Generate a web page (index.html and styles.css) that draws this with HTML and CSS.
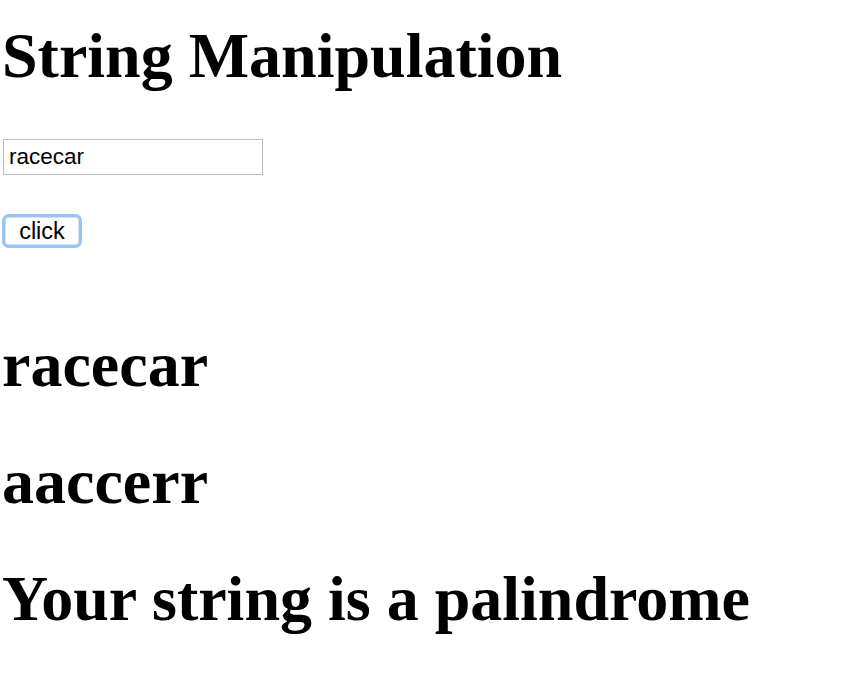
FILE: index.html
```html
<!DOCTYPE html>
<html>
<head>
<meta charset="utf-8">
<title>String Manipulation</title>
<link rel="stylesheet" href="styles.css">
</head>
<body>
<main class="page">
  <h1 class="heading title">String Manipulation</h1>
  <input class="text-input" type="text" value="racecar">
  <button class="btn" type="button">click</button>
  <h1 class="heading result result-first">racecar</h1>
  <h1 class="heading result">aaccerr</h1>
  <h1 class="heading result">Your string is a palindrome</h1>
</main>
</body>
</html>
```

FILE: styles.css
```css
html, body {
  margin: 0;
  padding: 0;
  background: #ffffff;
}

.page {
  display: flex;
  flex-direction: column;
  align-items: flex-start;
}

.heading {
  font-family: "Liberation Serif", "Times New Roman", serif;
  font-weight: bold;
  font-size: 64px;
  line-height: 74px;
  color: #000;
  margin: 0;
  padding-left: 2px;
  white-space: nowrap;
}

.title {
  margin-top: 19px;
}

.text-input {
  box-sizing: border-box;
  margin: 46px 0 0 3px;
  width: 260px;
  height: 36px;
  border: 1px solid #bdbdbd;
  padding: 0 5px;
  font-family: "Liberation Sans", Arial, sans-serif;
  font-size: 22.5px;
  color: #000;
  background: #fff;
  outline: none;
}

.btn {
  box-sizing: border-box;
  margin: 39px 0 0 2px;
  width: 80px;
  height: 34px;
  border: 3px solid #98c3f5;
  border-radius: 7px;
  background: #fff;
  box-shadow: inset 0 0 0 1px #cfe2fb;
  padding: 0;
  font-family: "Liberation Sans", Arial, sans-serif;
  font-size: 23.5px;
  color: #000;
  line-height: 26px;
}

.result {
  margin-top: 43px;
}

.result-first {
  margin-top: 80px;
}
```
